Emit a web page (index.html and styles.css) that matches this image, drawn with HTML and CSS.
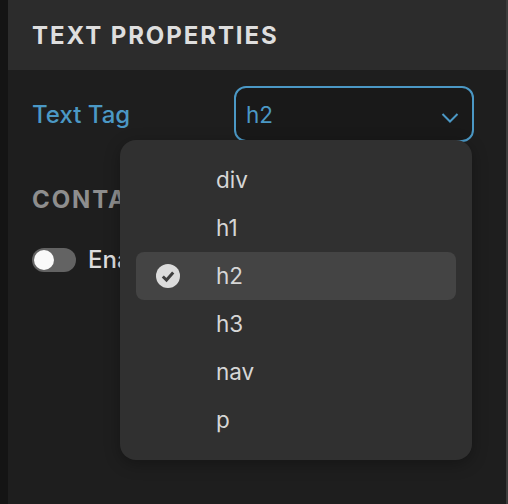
FILE: index.html
```html
<!DOCTYPE html>
<html lang="en">
<head>
    <meta charset="UTF-8">
    <title>Text Properties</title>
    <link rel="stylesheet" href="styles.css">
</head>
<body>
    <div class="panel">
        <div class="panel-header">TEXT PROPERTIES</div>
        <div class="panel-body">
            <div class="field">
                <span class="field-label">Text Tag</span>
                <div class="select">
                    <span>h2</span>
                    <svg class="chevron" width="18" height="10" viewBox="0 0 18 10"><path d="M1.5 1 L9 8.5 L16.5 1" fill="none" stroke="currentColor" stroke-width="2"/></svg>
                </div>
            </div>
            <div class="section-title">CONTAINER</div>
            <div class="toggle-row">
                <span class="toggle"><span class="toggle-knob"></span></span>
                <span class="toggle-label">Enable</span>
            </div>
        </div>
        <!-- Dropdown menu lies over the panel -->
        <ul class="menu">
            <li class="menu-item">div</li>
            <li class="menu-item">h1</li>
            <li class="menu-item selected">
                <svg class="check" width="24" height="24" viewBox="0 0 24 24"><circle cx="12" cy="12" r="12" fill="#dcdcdc"/><path d="M6.8 12.5 L10.5 16 L17.2 8.6" fill="none" stroke="#3f3f3f" stroke-width="3"/></svg>
                h2
            </li>
            <li class="menu-item">h3</li>
            <li class="menu-item">nav</li>
            <li class="menu-item">p</li>
        </ul>
    </div>
</body>
</html>
```

FILE: styles.css
```css
html, body {
    height: 100%;
}
body {
    margin: 0;
    overflow: hidden;
    background-color: #141414;
    font-family: 'Inter', sans-serif;
    padding-left: 8px;
    border-right: 2px solid #3c3c3c;
    box-sizing: border-box;
}
.panel {
    position: relative;
    height: 100%;
    background-color: #1e1e1e;
}
.panel-header {
    height: 70px;
    box-sizing: border-box;
    padding: 1px 0 0 24px;
    line-height: 70px;
    background-color: #2c2c2c;
    color: #dedede;
    font-size: 24px;
    font-weight: 700;
    letter-spacing: 1.92px;
}
.panel-body {
    padding: 16px 32px 0 24px;
}
.field {
    display: flex;
    align-items: center;
    justify-content: space-between;
}
.field-label {
    color: #4b98c5;
    font-size: 24px;
    font-weight: 500;
}
.select {
    display: flex;
    align-items: center;
    justify-content: space-between;
    width: 240px;
    height: 56px;
    box-sizing: border-box;
    padding: 0 13px 0 10px;
    border: 2px solid #4b98c5;
    border-radius: 12px;
    background-color: #191919;
    color: #4b98c5;
    font-size: 22.5px;
}
.chevron {
    margin-top: 7px;
}
.section-title {
    margin-top: 43px;
    color: #8e8e8e;
    font-size: 24px;
    font-weight: 700;
    letter-spacing: 1.92px;
    line-height: 30px;
}
.toggle-row {
    display: flex;
    align-items: center;
    gap: 12px;
    margin-top: 30px;
}
.toggle {
    display: block;
    width: 44px;
    height: 24px;
    border-radius: 12px;
    background-color: #636363;
}
.toggle-knob {
    display: block;
    width: 20px;
    height: 20px;
    margin: 2px;
    border-radius: 50%;
    background-color: #fafafa;
}
.toggle-label {
    color: #dedede;
    font-size: 24px;
    font-weight: 500;
}
.menu {
    position: absolute;
    top: 140px;
    left: 112px;
    width: 352px;
    box-sizing: border-box;
    margin: 0;
    padding: 16px;
    list-style: none;
    background-color: #303030;
    border-radius: 16px;
    box-shadow: 0 4px 16px rgba(0,0,0,0.3);
}
.menu-item {
    position: relative;
    height: 48px;
    padding-left: 80px;
    line-height: 48px;
    border-radius: 8px;
    color: #d6d6d6;
    font-size: 22.5px;
}
.menu-item.selected {
    background-color: #444444;
}
.check {
    position: absolute;
    left: 20px;
    top: 12px;
}
```
